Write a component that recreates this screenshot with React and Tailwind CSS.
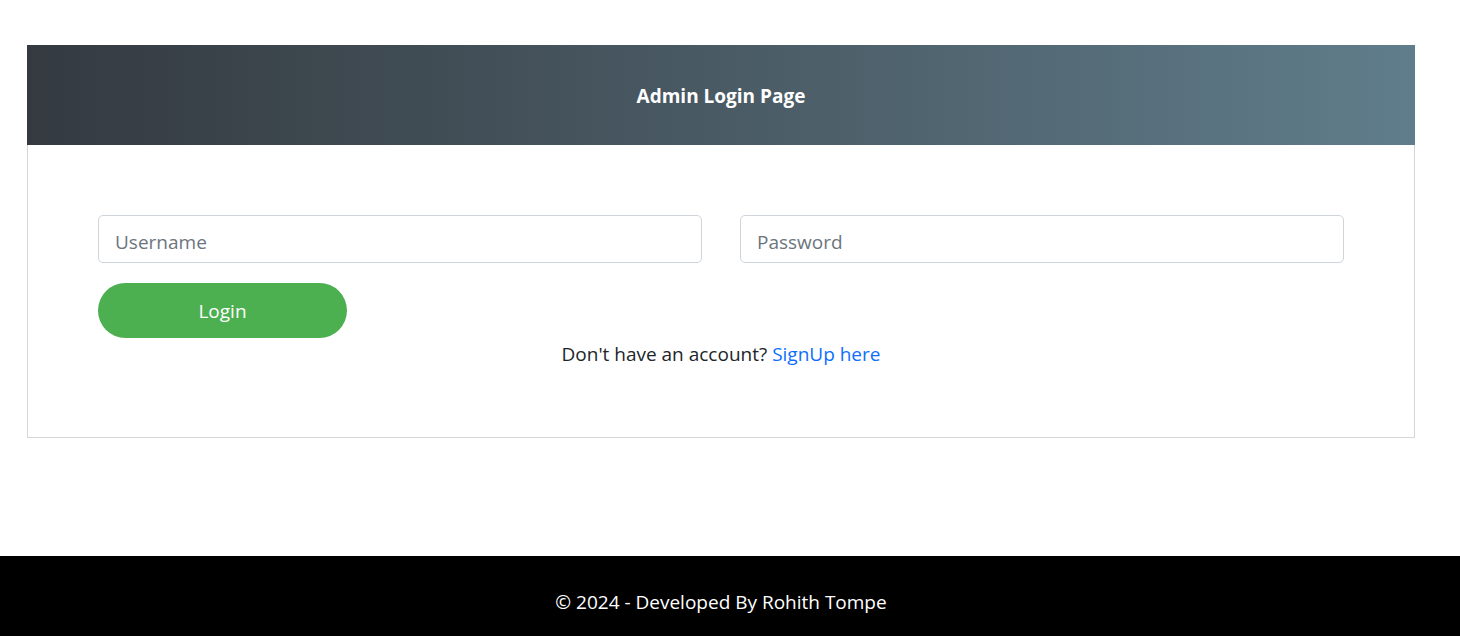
import React, { useState } from 'react';

const font = { fontFamily: '"Open Sans", "Noto Sans", sans-serif' };

const AdminLogin = () => {
  const [username, setUsername] = useState('');
  const [password, setPassword] = useState('');

  return (
    <div className="pt-[45px] pl-[27px] pr-[45px]">
      <div className="border border-[#d6d6d6]">
        {/* Header */}
        <div className="h-[100px] -mx-px -mt-px pt-[2px] flex items-center justify-center bg-gradient-to-r from-[#343a40] to-[#607d8b]">
          <h5 className="text-white text-[19px] font-bold">Admin Login Page</h5>
        </div>

        {/* Body */}
        <div className="px-[70px] pt-[70px] pb-[68px]">
          <div className="flex gap-[38px]">
            <input
              type="text"
              placeholder="Username"
              value={username}
              onChange={(e) => setUsername(e.target.value)}
              className="flex-1 h-[48px] px-4 pt-[5px] border border-[#ced4da] rounded-[5px] text-[19px] text-[#212529] placeholder:text-[#6c757d] outline-none"
            />
            <input
              type="password"
              placeholder="Password"
              value={password}
              onChange={(e) => setPassword(e.target.value)}
              className="flex-1 h-[48px] px-4 pt-[5px] border border-[#ced4da] rounded-[5px] text-[19px] text-[#212529] placeholder:text-[#6c757d] outline-none"
            />
          </div>
          <button className="mt-[20px] w-[249px] h-[55px] pt-[2px] rounded-full bg-[#4caf50] text-white text-[19px]">
            Login
          </button>
          <p className="text-center text-[19px] text-[#212529] leading-[30px] mt-[1px]">
            Don't have an account? <a href="#" className="text-[#0d6efd]">SignUp here</a>
          </p>
        </div>
      </div>
    </div>
  );
};

export default function App() {
  return (
    <div className="min-h-[636px] flex flex-col bg-white" style={font}>
      <AdminLogin />
      <footer className="mt-auto h-[80px] bg-black flex justify-center pt-[31px] pr-[18px]">
        <p className="text-white text-[19px] leading-[30px]">© 2024 - Developed By Rohith Tompe</p>
      </footer>
    </div>
  );
}
